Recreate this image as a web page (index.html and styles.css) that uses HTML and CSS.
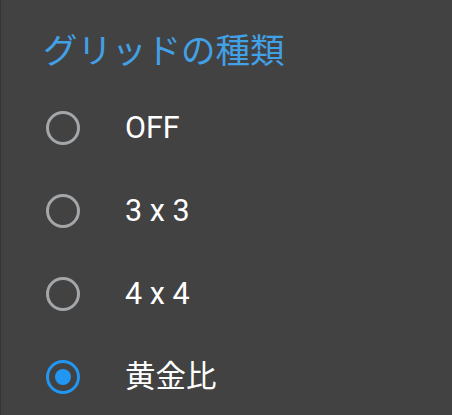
FILE: index.html
```html
<!DOCTYPE html>
<html lang="ja">
<head>
<meta charset="utf-8">
<link rel="stylesheet" href="styles.css">
</head>
<body>
<div class="dialog">
  <div class="title">グリッドの種類</div>
  <div class="options">
    <div class="row"><span class="radio"></span><span class="label">OFF</span></div>
    <div class="row"><span class="radio"></span><span class="label">3 x 3</span></div>
    <div class="row"><span class="radio"></span><span class="label">4 x 4</span></div>
    <div class="row"><span class="radio checked"></span><span class="label">黄金比</span></div>
  </div>
</div>
</body>
</html>
```
FILE: styles.css
```css
html, body {
  margin: 0;
  padding: 0;
  background: #424242;
}
.dialog {
  width: 452px;
  height: 415px;
  background: #424242;
  border-left: 1px solid #353535;
  box-sizing: border-box;
  font-family: Roboto, "Noto Sans CJK JP", sans-serif;
  overflow: hidden;
}
.title {
  box-sizing: border-box;
  height: 86px;
  padding: 28px 0 0 42px;
  line-height: 40px;
  font-size: 34.5px;
  color: #42a0e6;
  font-family: "Noto Sans CJK JP", sans-serif;
}
.row {
  display: flex;
  align-items: center;
  height: 83px;
}
.radio {
  box-sizing: border-box;
  width: 34px;
  height: 34px;
  margin-left: 45px;
  border: 3.5px solid #a4a7aa;
  border-radius: 50%;
  display: flex;
  align-items: center;
  justify-content: center;
  flex: none;
}
.radio.checked {
  border-color: #2196f3;
}
.radio.checked::after {
  content: "";
  width: 16px;
  height: 16px;
  border-radius: 50%;
  background: #2196f3;
}
.label {
  margin-left: 45px;
  font-size: 30.5px;
  color: #ffffff;
  line-height: 40px;
}
```
